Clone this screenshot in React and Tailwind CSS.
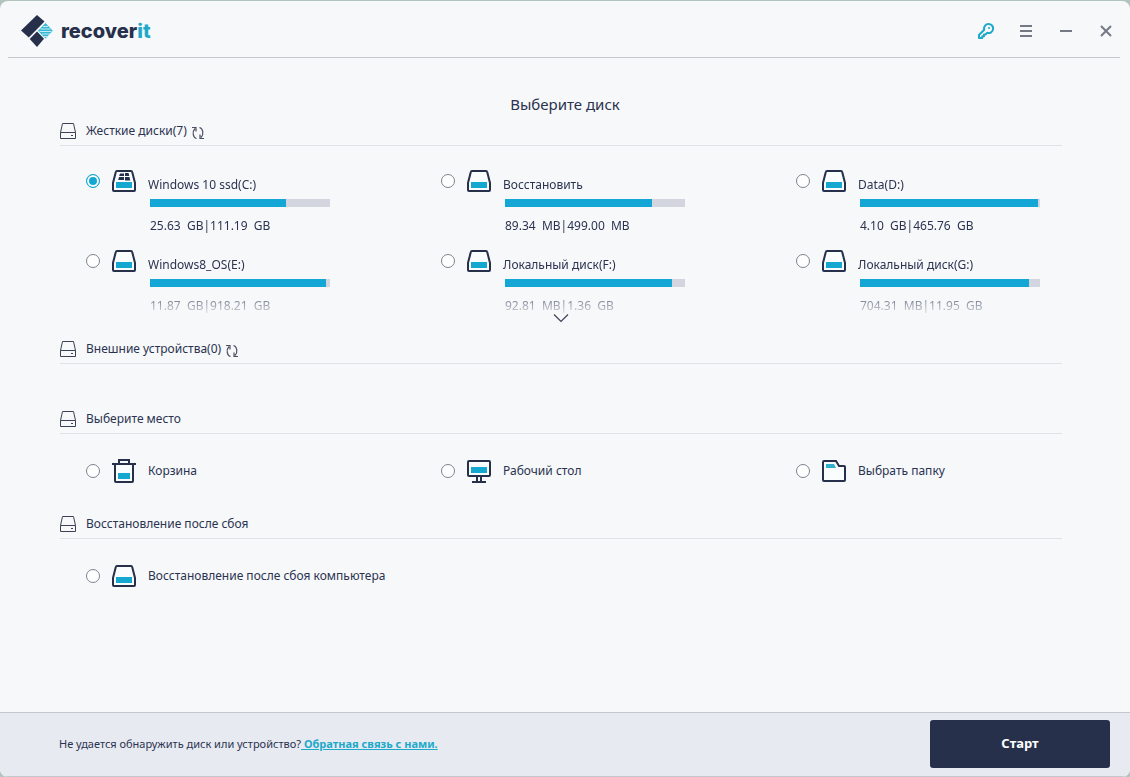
import { useState } from 'react';

const HARD_DRIVES = [
  { id: 'c', name: 'Windows 10 ssd(C:)', size: '25.63  GB|111.19  GB', used: 136, system: true },
  { id: 'r', name: 'Восстановить', size: '89.34  MB|499.00  MB', used: 147 },
  { id: 'd', name: 'Data(D:)', size: '4.10  GB|465.76  GB', used: 178 },
  { id: 'e', name: 'Windows8_OS(E:)', size: '11.87  GB|918.21  GB', used: 176 },
  { id: 'f', name: 'Локальный диск(F:)', size: '92.81  MB|1.36  GB', used: 167 },
  { id: 'g', name: 'Локальный диск(G:)', size: '704.31  MB|11.95  GB', used: 169 },
];

function Logo() {
  return (
    <div className="flex items-center gap-2">
      <svg width="32" height="32" viewBox="0 0 32 32" aria-hidden="true">
        <path d="M16 0 L23.5 6.500 L7.800 22.500 L0 15.500 Z" fill="#26304b" />
        <path d="M16 16.500 L23 23.700 L16 32 L8.700 24 Z" fill="#26304b" />
        <path d="M24.500 8 L31.800 15.700 L24.500 23.500 L17 15.700 Z" fill="#35b8d6" />
        <path d="M22 11.500h5M19.500 14h10M18.500 16.500h12M21 19h8M23 21.500h3" stroke="#d4f2f7" strokeWidth="0.900" />
      </svg>
      <span className="font-['Inter',sans-serif] text-xl font-extrabold leading-6 text-[#26304b]">
        recover<span className="text-[#1ea9cb]">it</span>
      </span>
    </div>
  );
}

function DriveIcon({ system }) {
  return (
    <svg width="24" height="22" viewBox="0 0 24 22" fill="none" aria-hidden="true">
      <path d="M5 1h14q1 0 1.200 1L23 13V20q0 1-1 1H2q-1 0-1-1V13L3.800 2q.2-1 1.200-1Z" fill="#fafdfe" stroke="#26304b" strokeWidth="2" />
      <path d="M4 12h16v6H4Z" fill="#14a7d0" />
      {system && (
        <path d="M8 3.500h4V6H7.200ZM13 3h3.500l.8 3H13ZM7 7h5v3H6.200ZM13 7h4.500l.8 3.500H13Z" fill="#26304b" />
      )}
    </svg>
  );
}

function TrashIcon() {
  return (
    <svg width="24" height="24" viewBox="0 0 24 24" fill="none" aria-hidden="true">
      <path d="M3 5v17q0 1 1 1h16q1 0 1-1V5" fill="#fafdfe" />
      <path d="M0 5h24M3 5v17q0 1 1 1h16q1 0 1-1V5M7 5V1h10v4" stroke="#26304b" strokeWidth="2" />
      <path d="M6 14h12v6H6Z" fill="#14a7d0" />
    </svg>
  );
}

function DesktopIcon() {
  return (
    <svg width="24" height="24" viewBox="0 0 24 24" fill="none" aria-hidden="true">
      <rect x="1" y="2" width="22" height="15" rx="1" fill="#fafdfe" stroke="#26304b" strokeWidth="2" />
      <path d="M4 8h16v6H4Z" fill="#14a7d0" />
      <path d="M10 18v4M14 18v4M5 23h14" stroke="#26304b" strokeWidth="2" />
    </svg>
  );
}

function FolderIcon() {
  return (
    <svg width="24" height="22" viewBox="0 0 24 22" fill="none" aria-hidden="true">
      <path d="M2 1h12l3 5h5q1 0 1 1v13q0 1-1 1H2q-1 0-1-1V2q0-1 1-1Z" fill="#fafdfe" stroke="#26304b" strokeWidth="2" />
      <path d="M4 4h8l2 4H4Z" fill="#2fb0cb" />
    </svg>
  );
}

function SectionIcon() {
  return (
    <svg width="16" height="16" viewBox="0 0 16 16" fill="none" stroke="#3b4256" aria-hidden="true">
      <path d="M2.500.500h11l2 9v6H.500v-6ZM.500 9.500h15M11 12.500h2" />
    </svg>
  );
}

function RefreshButton({ label }) {
  return (
    <button type="button" aria-label={label} className="ml-1 mt-1">
      <svg width="14" height="14" viewBox="0 0 14 14" fill="none" stroke="#4b5162" strokeWidth="1.200" aria-hidden="true">
        <path d="M5.500 12.500C2 11.500.8 6 4 2.500M1 1.500h4V5.500M8.500 1.500C12 2.500 13.200 8 10 11.500M13 12.500H9V8.500" />
      </svg>
    </button>
  );
}

function SectionHeader({ title, refresh }) {
  return (
    <div className="flex h-7 items-center border-b border-[#dfe2e6] pb-px">
      <SectionIcon />
      <h2 className="ml-2.5 text-xs leading-4">{title}</h2>
      {refresh && <RefreshButton label={`Обновить: ${title}`} />}
    </div>
  );
}

function Radio({ id, selected, onSelect }) {
  return (
    <input
      type="radio"
      name="target"
      id={id}
      checked={selected === id}
      onChange={() => onSelect(id)}
      className="size-3.5 shrink-0 appearance-none rounded-full border border-[#7d828c] bg-white checked:border-[#14a7d0] checked:bg-[#14a7d0] checked:shadow-[inset_0_0_0_2px_#fff]"
    />
  );
}

function Drive({ drive, selected, onSelect }) {
  return (
    <div className="flex h-20 items-start gap-3 pt-2">
      <div className="flex h-[22px] items-center gap-3">
        <Radio id={drive.id} selected={selected} onSelect={onSelect} />
        <DriveIcon system={drive.system} />
      </div>
      <div className="pt-[7px]">
        <label htmlFor={drive.id} className="block text-xs leading-4">{drive.name}</label>
        <div className="ml-0.5 mt-1.5 h-2 w-[180px] bg-[#d3d6de]">
          <div className="h-full bg-[#14a7d6]" style={{ width: `${(drive.used / 180) * 100}%` }} />
        </div>
        <p className="ml-0.5 mt-[11px] whitespace-pre text-xs leading-4">{drive.size}</p>
      </div>
    </div>
  );
}

function Place({ id, label, icon, selected, onSelect }) {
  return (
    <div className="flex h-6 items-center gap-3">
      <Radio id={id} selected={selected} onSelect={onSelect} />
      {icon}
      <label htmlFor={id} className="whitespace-nowrap text-xs leading-4">{label}</label>
    </div>
  );
}

function TitleBar() {
  return (
    <header className="ml-2 mr-2.5 flex h-[57px] items-center justify-between border-b border-[#c5c9cc] pl-[13px] pr-1 pt-1">
      <Logo />
      <div className="flex items-center gap-5 text-[#747984]">
        <button type="button" aria-label="Регистрация" className="text-[#1ea9c8]">
          <svg width="20" height="20" viewBox="0 0 20 20" fill="none" stroke="currentColor" strokeWidth="2" strokeLinejoin="round" aria-hidden="true">
            <path d="M12.500 3a4.500 4.500 0 1 1-1.200 8.800L9.500 13.500H8v1.800H6.300V17H3v-3L8.200 8.700A4.500 4.500 0 0 1 12.500 3Z" />
            <circle cx="13" cy="7" r="1" fill="currentColor" stroke="none" />
          </svg>
        </button>
        <button type="button" aria-label="Меню">
          <svg width="20" height="20" viewBox="0 0 20 20" stroke="currentColor" strokeWidth="2" aria-hidden="true">
            <path d="M4 5h12M4 10h12M4 15h12" />
          </svg>
        </button>
        <button type="button" aria-label="Свернуть">
          <svg width="20" height="20" viewBox="0 0 20 20" stroke="currentColor" strokeWidth="2" aria-hidden="true">
            <path d="M4 10h12" />
          </svg>
        </button>
        <button type="button" aria-label="Закрыть">
          <svg width="20" height="20" viewBox="0 0 20 20" stroke="currentColor" strokeWidth="2" aria-hidden="true">
            <path d="M5 5l10 10M15 5L5 15" />
          </svg>
        </button>
      </div>
    </header>
  );
}

export default function App() {
  const [selected, setSelected] = useState('c');

  return (
    <div className="bg-[#b3c4bc] pt-px font-['Noto_Sans',sans-serif] text-[#2b3350]">
      <div className="flex min-h-[calc(100vh-1px)] flex-col overflow-hidden rounded-lg bg-[#f6f8fa]">
        <TitleBar />

        <main className="flex-1 pt-[34px]">
          <h1 className="text-center text-[15px] leading-6">Выберите диск</h1>

          <div className="pl-[60px] pr-[68px]">
            <section className="mt-0.5">
              <SectionHeader title="Жесткие диски(7)" refresh />
              <div className="relative mt-4">
                <div className="grid grid-cols-3 gap-x-[89px] pl-[26px] [mask-image:linear-gradient(#000_126px,transparent_156px)]">
                  {HARD_DRIVES.map((drive) => (
                    <Drive key={drive.id} drive={drive} selected={selected} onSelect={setSelected} />
                  ))}
                </div>
                <button type="button" aria-label="Показать все диски" className="absolute -bottom-0.5 left-1/2 -translate-x-1/2">
                  <svg width="16" height="12" viewBox="0 0 16 12" fill="none" stroke="#3b4256" strokeWidth="1.200" aria-hidden="true">
                    <path d="M1 2.500l7 7L15 2.500" />
                  </svg>
                </button>
              </div>
            </section>

            <section className="mt-3.5">
              <SectionHeader title="Внешние устройства(0)" refresh />
            </section>

            <section className="mt-[42px]">
              <SectionHeader title="Выберите место" />
              <div className="mt-[25px] grid grid-cols-3 gap-x-[89px] pl-[26px]">
                <Place id="trash" label="Корзина" icon={<TrashIcon />} selected={selected} onSelect={setSelected} />
                <Place id="desktop" label="Рабочий стол" icon={<DesktopIcon />} selected={selected} onSelect={setSelected} />
                <Place id="folder" label="Выбрать папку" icon={<FolderIcon />} selected={selected} onSelect={setSelected} />
              </div>
            </section>

            <section className="mt-7">
              <SectionHeader title="Восстановление после сбоя" />
              <div className="mt-[25px] pl-[26px]">
                <Place id="crash" label="Восстановление после сбоя компьютера" icon={<DriveIcon />} selected={selected} onSelect={setSelected} />
              </div>
            </section>
          </div>
        </main>

        <footer className="flex h-[65px] items-center justify-between border-y border-[#c3c7cb] bg-[#e7eaf0] pb-0.5 pl-[59px] pr-5">
          <p className="text-[11px] leading-4">
            Не удается обнаружить диск или устройство?
            <a href="#contact" className="whitespace-pre font-bold text-[#1ea9cb] underline"> Обратная связь с нами.</a>
          </p>
          <button type="button" className="h-12 w-[180px] rounded-[3px] bg-[#26304b] text-[13px] font-bold text-white">
            Старт
          </button>
        </footer>
      </div>
    </div>
  );
}
